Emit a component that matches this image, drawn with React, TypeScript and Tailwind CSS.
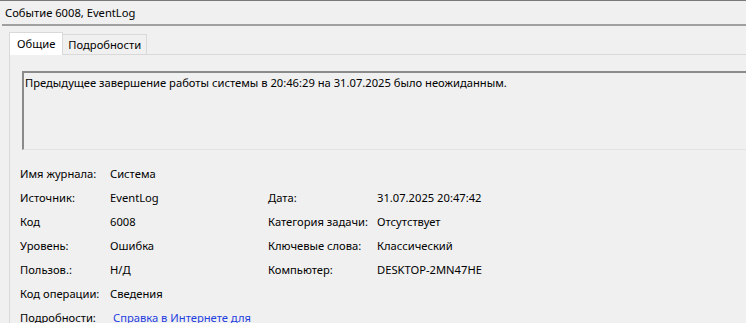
import React from "react";

const font = { fontFamily: '"Noto Sans", "Open Sans", sans-serif' };

function Row({ l1, v1, l2, v2, link }: { l1: string; v1: string; l2?: string; v2?: string; link?: boolean }) {
  return (
    <div className="flex h-[24px] items-center">
      <div className="w-[90px] shrink-0 whitespace-nowrap">{l1}</div>
      <div className={`w-[158px] shrink-0 whitespace-nowrap ${link ? "text-[#1f3fe0] pl-[3px]" : ""}`}>{v1}</div>
      {l2 && <div className="w-[109px] shrink-0 whitespace-nowrap">{l2}</div>}
      {v2 && <div className="whitespace-nowrap">{v2}</div>}
    </div>
  );
}

export default function App() {
  return (
    <div
      className="w-[746px] h-[323px] overflow-hidden bg-[#f0f0f0] text-[11.2px] leading-[16px] text-black border-t border-[#7a7a7a]"
      style={font}
    >
      <div className="h-[23px] flex items-center pl-[5px]">Событие 6008, EventLog</div>
      <div className="ml-[2px] h-[2px] bg-[#a0a0a0]" />
      <div className="pl-[9px] pt-[5px]">
        <div className="flex items-end h-[23px]">
          <div className="h-[23px] px-[7px] bg-white border border-b-0 border-[#d9d9d9] flex items-center relative z-10 -mb-px">
            Общие
          </div>
          <div className="h-[20px] px-[5px] bg-[#f0f0f0] border border-l-0 border-b-0 border-[#d9d9d9] flex items-center">
            Подробности
          </div>
        </div>
        <div className="border-t border-l border-[#d9d9d9] h-[300px] pl-[12px] pt-[16px]">
          <div className="h-[79px] border-t-2 border-l-2 border-[#8a8a8a] border-b border-b-[#e3e3e3] pl-[1px] pt-[2px] whitespace-nowrap">
            Предыдущее завершение работы системы в 20:46:29 на 31.07.2025 было неожиданным.
          </div>
          <div className="pt-[12px] -ml-[2px]">
            <Row l1="Имя журнала:" v1="Система" />
            <Row l1="Источник:" v1="EventLog" l2="Дата:" v2="31.07.2025 20:47:42" />
            <Row l1="Код" v1="6008" l2="Категория задачи:" v2="Отсутствует" />
            <Row l1="Уровень:" v1="Ошибка" l2="Ключевые слова:" v2="Классический" />
            <Row l1="Пользов.:" v1="Н/Д" l2="Компьютер:" v2="DESKTOP-2MN47HE" />
            <Row l1="Код операции:" v1="Сведения" />
            <Row l1="Подробности:" v1="Справка в Интернете для" link />
          </div>
        </div>
      </div>
    </div>
  );
}
